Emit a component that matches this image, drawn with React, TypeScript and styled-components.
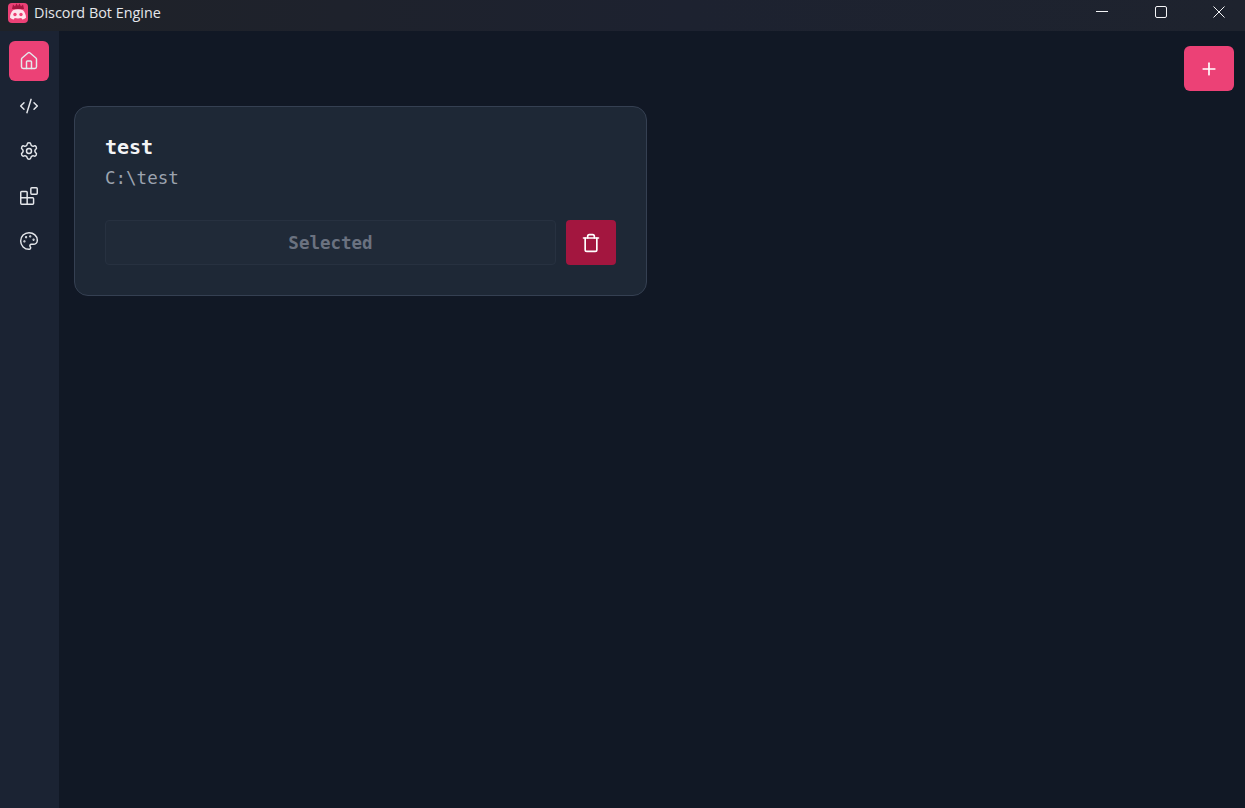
import * as React from "react"
import styled, { createGlobalStyle } from "styled-components"
import { House, CodeXml, Settings, Palette, Plus, Trash } from "lucide-react"

const GlobalStyle = createGlobalStyle`
    html, body {
        margin: 0;
        padding: 0;
        height: 100%;
        background: #111825;
    }
    #root {
        height: 100%;
    }
`

const Window = styled.div`
    height: 808px;
    display: flex;
    flex-direction: column;
    overflow: hidden;
`

const TitleBar = styled.div`
    height: 31px;
    flex-shrink: 0;
    display: flex;
    align-items: center;
    gap: 18.5px;
    padding-right: 6px;
    box-sizing: border-box;
    background: linear-gradient(90deg, #1f2228 0%, #1d2230 55%, #1e232e 100%);
`

const Brand = styled.div`
    flex: 1;
    display: flex;
    align-items: center;
    margin-top: -6px;
`

const Logo = styled.svg`
    width: 20px;
    height: 20px;
    margin: 0 6px 0 8px;
    flex-shrink: 0;
`

const Title = styled.span`
    font-family: "Open Sans", "Noto Sans", sans-serif;
    font-size: 14.4px;
    color: #e5e7eb;
`

const WindowButton = styled.div`
    width: 40px;
    height: 31px;
    margin-top: -7px;
    display: flex;
    align-items: center;
    justify-content: center;
`

const Body = styled.div`
    flex: 1;
    display: flex;
    min-height: 0;
`

const Sidebar = styled.nav`
    width: 59px;
    flex-shrink: 0;
    background: #1b2333;
    padding: 10px 0 0 9px;
    box-sizing: border-box;
    display: flex;
    flex-direction: column;
    gap: 5px;
`

const NavItem = styled.div<{ $active?: boolean }>`
    width: 40px;
    height: 40px;
    border-radius: 6px;
    display: flex;
    align-items: center;
    justify-content: center;
    color: #e5e7eb;
    background: ${(p) => (p.$active ? "#ec4176" : "transparent")};
`

const Main = styled.main`
    flex: 1;
    padding: 15px 11px 0 15px;
    display: flex;
    flex-direction: column;
    gap: 15px;
`

const Toolbar = styled.div`
    display: flex;
    justify-content: flex-end;
`

const AddButton = styled.div`
    width: 50px;
    height: 45px;
    border-radius: 6px;
    background: #ec4176;
    color: #fff;
    display: flex;
    align-items: center;
    justify-content: center;
`

const Card = styled.section`
    width: 573px;
    height: 190px;
    box-sizing: border-box;
    background: #1e2836;
    border: 1px solid #354052;
    border-radius: 14px;
    padding: 29px 30px 30px;
    font-family: "DejaVu Sans Mono", "Liberation Mono", monospace;
`

const ProjectName = styled.div`
    font-size: 20px;
    line-height: 22px;
    font-weight: 700;
    color: #f3f4f6;
`

const ProjectPath = styled.div`
    font-size: 17.5px;
    line-height: 22px;
    margin-top: 9px;
    color: #9ca3af;
`

const Actions = styled.div`
    display: flex;
    gap: 10px;
    margin-top: 31px;
`

const SelectedButton = styled.div`
    flex: 1;
    height: 45px;
    box-sizing: border-box;
    border: 1px solid #273140;
    border-radius: 4px;
    background: #202a38;
    display: flex;
    align-items: center;
    justify-content: center;
    font-size: 17.5px;
    font-weight: 700;
    color: #6b7280;
`

const DeleteButton = styled.div`
    width: 50px;
    height: 45px;
    border-radius: 4px;
    background: #a3163f;
    color: #fff;
    display: flex;
    align-items: center;
    justify-content: center;
`

const BlocksIcon: React.FunctionComponent = () => (
    <svg width="22" height="22" viewBox="0 0 24 24" fill="none" stroke="currentColor" strokeWidth="1.6" strokeLinecap="round" strokeLinejoin="round">
        <rect x="14" y="3" width="7" height="7" rx="1" />
        <path d="M10 21V8a1 1 0 0 0-1-1H4a1 1 0 0 0-1 1v12a1 1 0 0 0 1 1h12a1 1 0 0 0 1-1v-5a1 1 0 0 0-1-1H3" />
    </svg>
)

const sideIcon = { size: 20, strokeWidth: 1.75 }

const navItems = [
    <House {...sideIcon} />,
    <CodeXml {...sideIcon} />,
    <Settings {...sideIcon} />,
    <BlocksIcon />,
    <Palette {...sideIcon} />,
]

const App: React.FunctionComponent = () => {
    return <Window>
        <GlobalStyle />
        <TitleBar>
            <Brand>
                <Logo viewBox="0 0 20 20">
                    <rect width="20" height="20" rx="4" fill="#ec4176" />
                    <path d="M4 6L5 1.500 7 3.500 8.500 .500 10 3 11.500 .500 13 3.500 15 1.500 16 6z" fill="#a3163f" />
                    <path d="M5 7.200c3.300-1.300 6.700-1.300 10 0 1.900 2 3 4.500 3 7.500-1.200 1-2.500 1.600-3.700 1.800l-1-1.500c-2.200.5-4.400.5-6.600 0l-1 1.500C4.500 16.300 3.200 15.700 2 14.700c0-3 1.100-5.500 3-7.500z" fill="#fde4ec" />
                    <circle cx="7" cy="11.500" r="1.700" fill="#ec4176" />
                    <circle cx="13" cy="11.500" r="1.700" fill="#ec4176" />
                </Logo>
                <Title>Discord Bot Engine</Title>
            </Brand>
            <WindowButton>
                <svg width="12" height="12" viewBox="0 0 12 12"><path d="M0 5.500h12" stroke="#f3f4f6" strokeWidth="1" /></svg>
            </WindowButton>
            <WindowButton>
                <svg width="12" height="12" viewBox="0 0 12 12"><rect x=".5" y=".5" width="11" height="11" rx="1.500" fill="none" stroke="#f3f4f6" strokeWidth="1" /></svg>
            </WindowButton>
            <WindowButton>
                <svg width="12" height="12" viewBox="0 0 12 12"><path d="M.5.500l11 11M11.500.500l-11 11" stroke="#f3f4f6" strokeWidth="1" /></svg>
            </WindowButton>
        </TitleBar>
        <Body>
            <Sidebar>
                {navItems.map((icon, i) => <NavItem key={i} $active={i == 0}>{icon}</NavItem>)}
            </Sidebar>
            <Main>
                <Toolbar>
                    <AddButton><Plus size={20} strokeWidth={2} /></AddButton>
                </Toolbar>
                <Card>
                    <ProjectName>test</ProjectName>
                    <ProjectPath>C:\test</ProjectPath>
                    <Actions>
                        <SelectedButton>Selected</SelectedButton>
                        <DeleteButton><Trash size={20} strokeWidth={2} /></DeleteButton>
                    </Actions>
                </Card>
            </Main>
        </Body>
    </Window>
}

export default App
